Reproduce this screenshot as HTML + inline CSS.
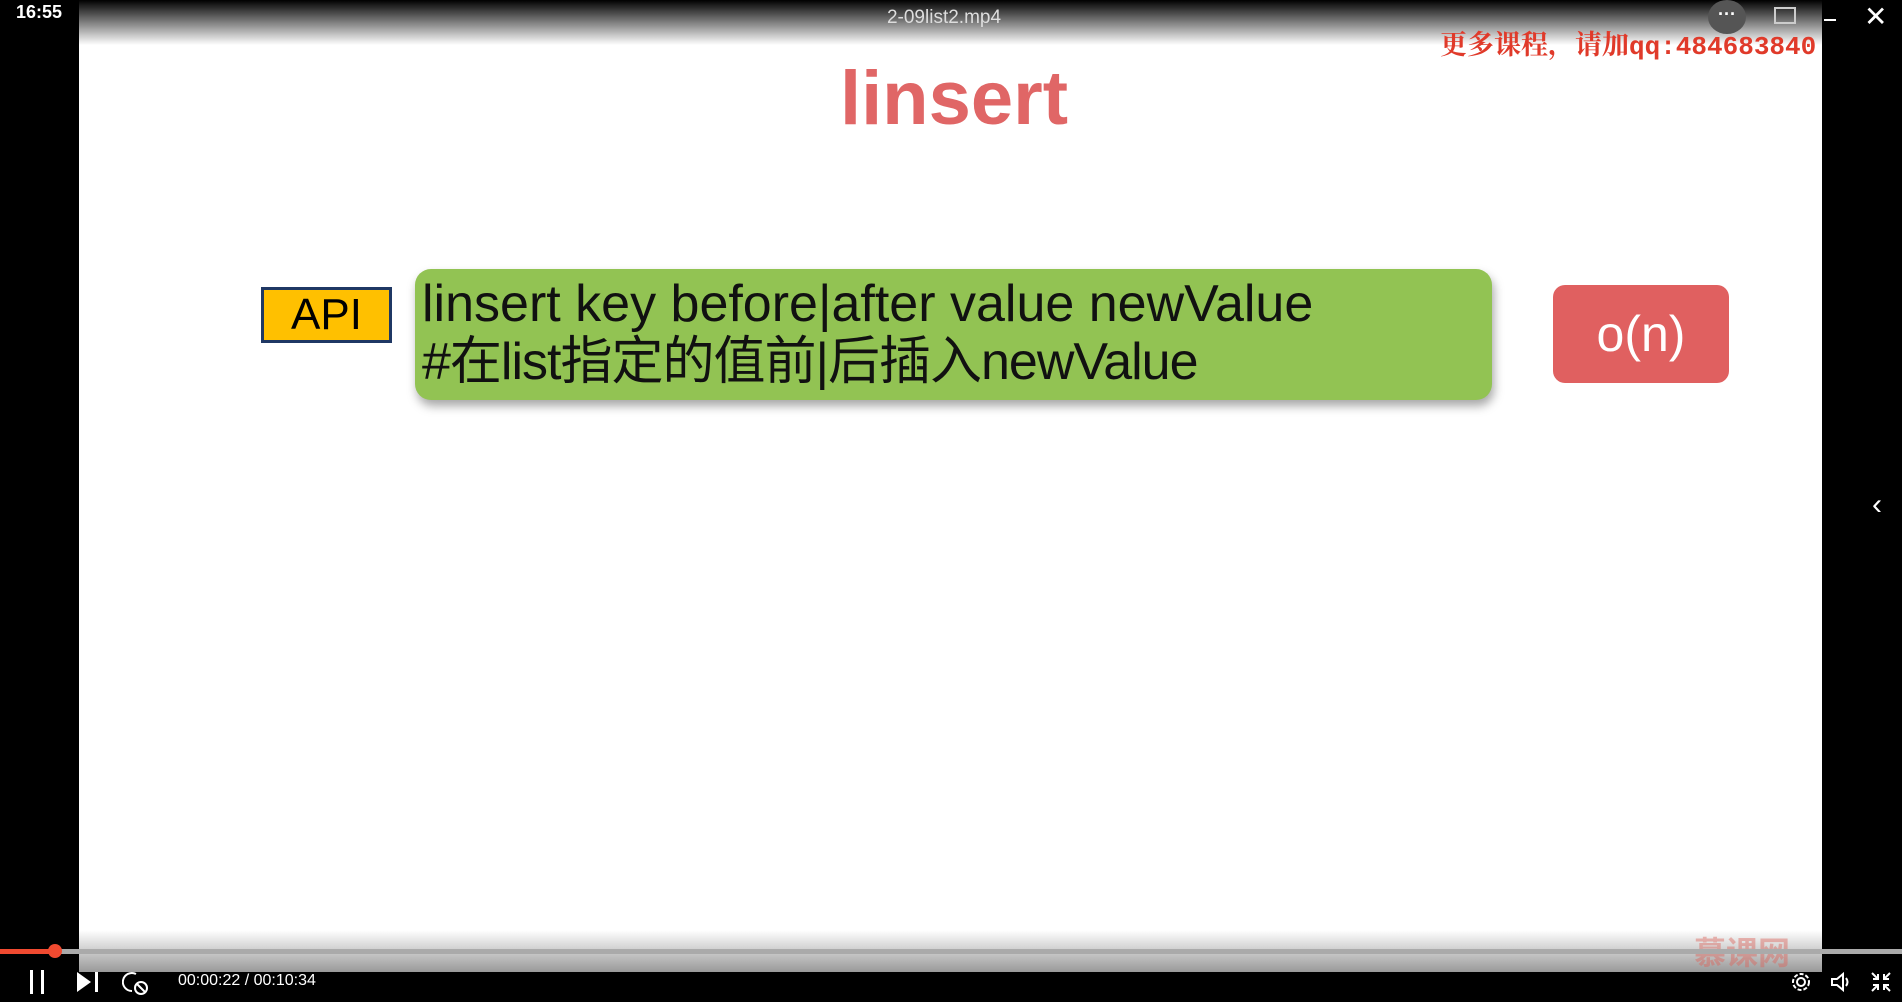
<!DOCTYPE html><html><head><meta charset="utf-8"><style>
body{margin:0;width:1902px;height:1002px;background:#000;overflow:hidden;position:relative;font-family:"Liberation Sans","Noto Sans CJK SC",sans-serif}
.vid{position:absolute;left:79px;top:0;width:1743px;height:972px;background:#fff}
.topg{position:absolute;left:0;top:0;width:1902px;height:45px;background:linear-gradient(#000 0%,rgba(0,0,0,.6) 40%,rgba(0,0,0,0))}
.botg{position:absolute;left:79px;top:930px;width:1743px;height:42px;background:linear-gradient(rgba(160,160,160,0),#999)}
.ab{position:absolute}
</style></head><body>
<div class="vid"></div>
<div class="topg"></div>
<div class="ab" style="left:16px;top:2px;color:#fff;font-weight:bold;font-size:18px">16:55</div>
<div class="ab" style="left:844px;width:200px;text-align:center;top:7px;color:#ddd;font-size:19px">2-09list2.mp4</div>
<div class="ab" style="left:1708px;top:0;width:38px;height:34px;border-radius:50%;background:#555;color:#fff;text-align:center;font-size:18px;line-height:28px;font-weight:bold">···</div>
<div class="ab" style="left:1774px;top:7px;width:18px;height:13px;border:2px solid #ccc"></div>
<div class="ab" style="left:1824px;top:0;width:78px;height:40px;background:#000"></div>
<div class="ab" style="left:1824px;top:19px;width:12px;height:2px;background:#fff"></div>
<div class="ab" style="left:1864px;top:0;color:#fff;font-size:28px">✕</div>
<div class="ab" style="left:1440px;top:23px;color:#e03a2a;font-family:'Liberation Serif','Noto Serif CJK SC',serif;font-weight:bold;font-size:27px;white-space:nowrap">更多课程，请加<span style="font-family:'Liberation Mono',monospace;font-size:26px">qq:484683840</span></div>
<div class="ab" style="left:754px;width:400px;text-align:center;top:55px;color:#e06666;font-weight:bold;font-size:76px">linsert</div>
<div class="ab" style="left:261px;top:287px;width:125px;height:50px;background:#ffc000;border:3px solid #1f3864;text-align:center;font-size:44px;line-height:50px">API</div>
<div class="ab" style="left:415px;top:269px;width:1077px;height:131px;background:#92c353;border-radius:16px;box-shadow:2px 6px 10px rgba(0,0,0,.35)"></div>
<div class="ab" style="left:422px;top:275px;font-size:52px;line-height:58px;color:#111;white-space:nowrap">linsert key before|after value newValue<br><span style="letter-spacing:-1px">#在list指定的值前|后插入newValue</span></div>
<div class="ab" style="left:1553px;top:285px;width:176px;height:98px;background:#e06060;border-radius:12px;color:#fff;text-align:center;font-size:50px;line-height:98px">o(n)</div>
<div class="ab" style="left:1872px;top:488px;color:#fff;font-size:30px">‹</div>
<div class="botg"></div>
<div class="ab" style="left:1694px;top:928px;color:rgba(220,100,90,.45);font-size:32px;font-weight:bold">慕课网</div>
<div class="ab" style="left:0;top:949px;width:1902px;height:5px;background:#aaa"></div>
<div class="ab" style="left:0;top:949px;width:56px;height:5px;background:#f04a30"></div>
<div class="ab" style="left:48px;top:944px;width:14px;height:14px;border-radius:50%;background:#f04a30"></div>
<div class="ab" style="left:30px;top:970px;width:3px;height:24px;background:#fff"></div>
<div class="ab" style="left:41px;top:970px;width:3px;height:24px;background:#fff"></div>
<svg class="ab" style="left:76px;top:971px" width="24" height="22"><path d="M1 1 L15 11 L1 21Z" fill="#fff"/><rect x="19" y="1" width="3" height="20" fill="#fff"/></svg>
<svg class="ab" style="left:122px;top:970px" width="28" height="26" fill="none" stroke="#fff" stroke-width="2"><path d="M14 4 A9 9 0 1 0 10 21"/><circle cx="19" cy="18" r="6"/><path d="M15 14 L23 22"/></svg>
<div class="ab" style="left:178px;top:972px;color:#fff;font-size:16px">00:00:22 / 00:10:34</div>
<svg class="ab" style="left:1790px;top:971px" width="22" height="22" fill="none" stroke="#fff" stroke-width="2"><circle cx="11" cy="11" r="4"/><circle cx="11" cy="11" r="8" stroke-dasharray="4 2"/></svg>
<svg class="ab" style="left:1830px;top:971px" width="22" height="22" fill="none" stroke="#fff" stroke-width="2"><path d="M2 8 H7 L13 3 V19 L7 14 H2Z"/><path d="M16 7 Q19 11 16 15"/></svg>
<svg class="ab" style="left:1870px;top:971px" width="22" height="22" fill="none" stroke="#fff" stroke-width="2"><path d="M2 2 L8 8 M8 3 V8 H3 M20 2 L14 8 M14 3 V8 H19 M2 20 L8 14 M8 19 V14 H3 M20 20 L14 14 M14 19 V14 H19"/></svg>
</body></html>
